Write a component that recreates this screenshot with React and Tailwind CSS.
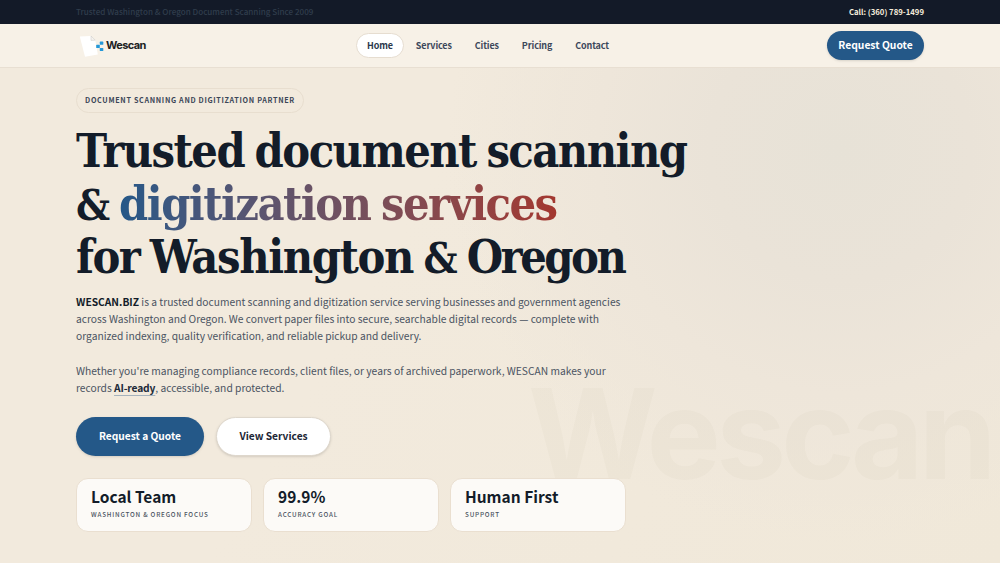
const navItems = [
  { label: "Home", className: "border-[#e6ddd0] bg-white text-[#2a374b]" },
  { label: "Services", className: "border-transparent text-[#3d485b]" },
  { label: "Cities", className: "border-transparent text-[#3d485b]" },
  { label: "Pricing", className: "border-transparent text-[#3d485b]" },
  { label: "Contact", className: "border-transparent text-[#3d485b]" },
];

const stats = [
  { title: "Local Team", label: "Washington & Oregon Focus" },
  { title: "99.9%", label: "Accuracy Goal" },
  { title: "Human First", label: "Support" },
];

const LogoMark = () => (
  <svg width="26" height="24" viewBox="0 0 26 24" aria-hidden="true">
    <path d="M0.8 2.6 12 2 16.3 6.2 18.8 20.6 6 22.8Z" fill="#fff" />
    <path d="M12 2v4.4l4.3-.2Z" fill="#f6f4f0" stroke="#c9c7c3" strokeWidth="0.5" />
    <g fill="#2498d8">
      <rect x="20.8" y="7.6" width="3.5" height="3.2" rx="0.6" />
      <rect x="17.2" y="10.7" width="3.6" height="3.4" rx="0.6" />
      <rect x="20.8" y="13.9" width="3.5" height="3.2" rx="0.6" />
    </g>
  </svg>
);

const TopBar = () => (
  <div className="flex h-6 items-center justify-between bg-[#131a28] px-[76px] leading-none">
    <span className="text-[8.1px] font-medium text-[#303d4c]">
      Trusted Washington &amp; Oregon Document Scanning Since 2009
    </span>
    <span className="text-[7.75px] font-bold text-[#f5ecdc]">Call: (360) 789-1499</span>
  </div>
);

const Header = () => (
  <header className="flex h-11 items-center border-b border-[#e8dfd2] bg-[#f7f1e7] px-[76px]">
    <div className="flex w-[280px] shrink-0 items-center pl-[3px]">
      <LogoMark />
      <span className="ml-px font-['Inter'] text-[11px] font-bold tracking-[-0.6px] text-[#20211f]">
        Wescan
      </span>
    </div>
    <nav className="flex gap-px">
      {navItems.map((item) => (
        <a
          key={item.label}
          href="#"
          className={`flex h-[25px] items-center justify-center rounded-full border px-[10px] text-[9px] font-bold leading-none tracking-[-0.13px] ${item.className}`}
        >
          {item.label}
        </a>
      ))}
    </nav>
    <button className="ml-auto h-[29px] w-[97px] rounded-full bg-[#245888] text-[10.3px] font-bold leading-none text-white shadow-sm">
      Request Quote
    </button>
  </header>
);

const Hero = () => (
  <main className="relative flex-1 px-[76px] pt-[20px]">
    <div
      aria-hidden="true"
      className="absolute top-[298px] left-[528px] font-['Inter'] text-[125px] leading-[136px] font-bold tracking-[-4.9px] text-[#564a35]/[0.022]"
    >
      Wescan
    </div>

    <div className="relative">
      <div className="flex h-[25px] w-[228px] items-center justify-center rounded-full border border-[#e8decf] text-[7.2px] font-bold tracking-[0.68px] text-[#3b4657]">
        DOCUMENT SCANNING AND DIGITIZATION PARTNER
      </div>

      <h1 className="mt-[11px] font-['DejaVu_Serif_Condensed','DejaVu_Serif',serif] text-[46.5px] leading-[53px] font-bold tracking-[-1.55px] whitespace-nowrap text-[#131c29] [word-spacing:-2.5px]">
        <span className="block">Trusted document scanning</span>
        <span className="block">
          <span className="text-[42px] leading-none">&amp;</span>{" "}
          <span className="bg-gradient-to-r from-[#245888] to-[#a3372f] bg-clip-text text-transparent">
            digitization services
          </span>
        </span>
        <span className="block">
          for <span className="tracking-[-1.4px]">Washington</span>{" "}
          <span className="text-[42px] leading-none">&amp;</span>{" "}
          <span className="tracking-[-2.5px]">Oregon</span>
        </span>
      </h1>

      <div className="mt-[10px] text-[10.26px] leading-[17.2px] whitespace-nowrap text-[#4a5361]">
        <p>
          <strong className="text-[#131c29]">WESCAN.BIZ</strong> is a trusted document scanning and
          digitization service serving businesses and government agencies
          <br />
          across Washington and Oregon. We convert paper files into secure, searchable digital
          records — complete with
          <br />
          organized indexing, quality verification, and reliable pickup and delivery.
        </p>
        <p className="mt-[17.2px]">
          Whether you're managing compliance records, client files, or years of archived paperwork,
          WESCAN makes your
          <br />
          records{" "}
          <a href="#" className="font-bold tracking-[-0.15px] text-[#202938] underline decoration-[#a5b2bc] decoration-1 underline-offset-[3px]">
            AI-ready
          </a>
          , accessible, and protected.
        </p>
      </div>

      <div className="mt-[21px] flex gap-[12px] text-[10.2px] font-bold leading-none">
        <button className="h-[39px] w-[128px] rounded-full bg-[#245888] pb-px text-white shadow-sm">
          Request a Quote
        </button>
        <button className="h-[39px] w-[115px] rounded-full border border-[#ded7cc] bg-white pb-px text-[#1c2635] shadow-sm">
          View Services
        </button>
      </div>

      <div className="mt-[22px] grid w-[550px] grid-cols-3 gap-[11px]">
        {stats.map((stat) => (
          <div
            key={stat.title}
            className="h-[54px] rounded-xl border border-[#eadfd0] bg-[#fcfaf7] px-[14px] pt-[6px]"
          >
            <div className="text-[15.5px] font-bold leading-[22px] text-[#131c29]">{stat.title}</div>
            <div className="mt-[2px] text-[6.3px] font-medium leading-[12px] tracking-[0.8px] text-[#4a5361] uppercase">
              {stat.label}
            </div>
          </div>
        ))}
      </div>
    </div>
  </main>
);

export default function App() {
  return (
    <div className="flex h-[563px] w-[1000px] flex-col overflow-hidden bg-[#f2eadc] bg-[radial-gradient(circle_at_840px_150px,#e7e2d7_0%,#eae3d8_14%,#eee6da_26%,transparent_42%),linear-gradient(120deg,#f2eadd_40%,#f0e8d9_100%)] font-['Noto_Sans_CJK_SC',sans-serif]">
      <TopBar />
      <Header />
      <Hero />
    </div>
  );
}
